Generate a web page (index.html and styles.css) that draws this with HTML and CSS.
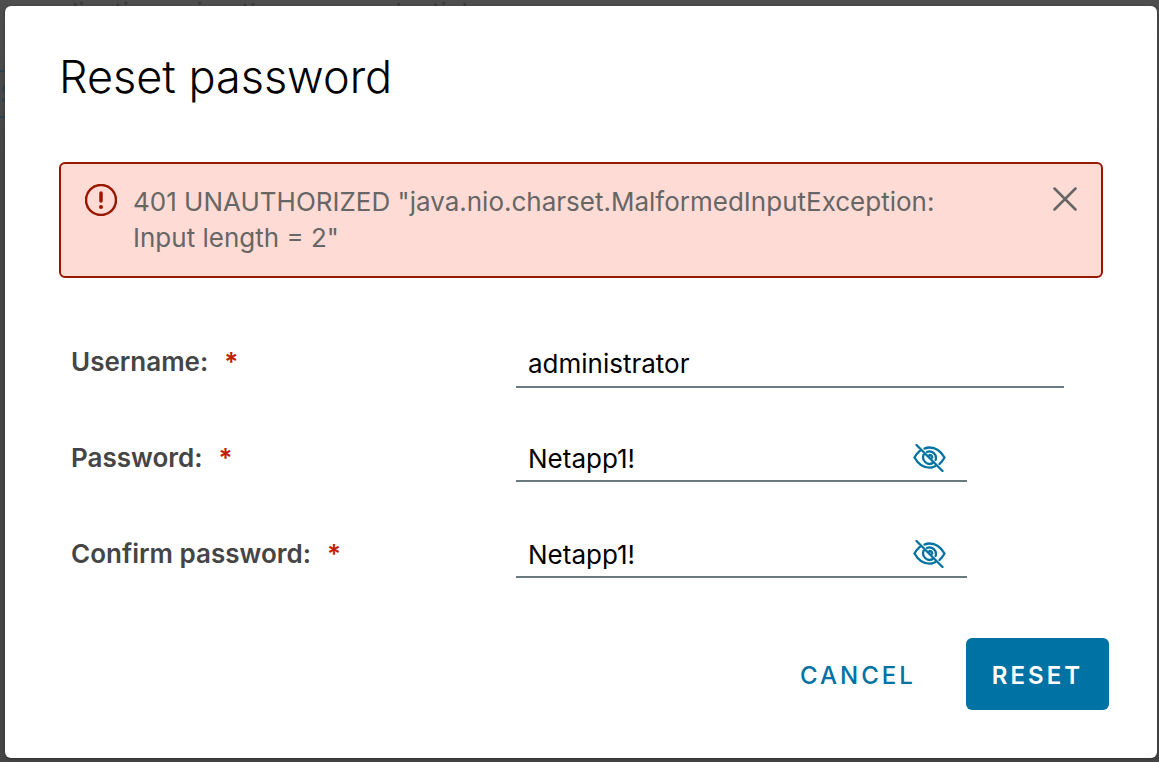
FILE: index.html
```html
<!DOCTYPE html>
<html lang="en">
<head>
<meta charset="utf-8">
<title>Reset password</title>
<link rel="stylesheet" href="styles.css">
</head>
<body>
<div class="page" aria-hidden="true">
  <p class="page-text">e application using the new credentials</p>
  <span class="page-action">S</span>
</div>
<div class="overlay">
<form class="modal" role="dialog" aria-modal="true" aria-labelledby="title">
  <h1 class="title" id="title">Reset password</h1>
  <div class="alert" role="alert">
    <svg class="alert-icon" viewBox="0 0 32 32" aria-hidden="true">
      <circle cx="16" cy="16" r="15"/>
      <path d="M16 9v8"/>
      <circle class="dot" cx="16" cy="23" r="2"/>
    </svg>
    <p class="alert-text">401 UNAUTHORIZED "java.nio.charset.MalformedInputException: Input length = 2"</p>
    <button class="close" type="button" aria-label="Close alert">
      <svg viewBox="0 0 24 24" aria-hidden="true"><path d="M1.500 1.500l21 21M22.500 1.500l-21 21"/></svg>
    </button>
  </div>
  <div class="fields">
    <div class="field">
      <label class="label" for="username">Username:<span class="required">*</span></label>
      <div class="control"><input class="input" id="username" type="text" value="administrator" required></div>
    </div>
    <div class="field">
      <label class="label" for="password">Password:<span class="required">*</span></label>
      <div class="control control-short">
        <input class="input" id="password" type="text" value="Netapp1!" required>
        <button class="eye" type="button" aria-label="Hide password">
          <svg viewBox="0 0 34 28" aria-hidden="true"><path d="M11.500 4.600C13 3.900 14.800 3.500 16.500 3.500c6.500 0 11.500 4 15 10-1.400 2.600-3 4.700-5 6.500M22 22.300c-1.700.900-3.600 1.400-5.500 1.400-6.500 0-11.500-4-15-10.200C3 10.800 4.700 8.700 6.800 6.900M14 7.800A6.600 6.600 0 0 1 22.600 16M19.200 19.400A6.600 6.600 0 0 1 10.500 11M16.500 11a3 3 0 0 1 2.800 2.500M3.500 1l26 26"/></svg>
        </button>
      </div>
    </div>
    <div class="field">
      <label class="label" for="confirm">Confirm password:<span class="required">*</span></label>
      <div class="control control-short">
        <input class="input" id="confirm" type="text" value="Netapp1!" required>
        <button class="eye" type="button" aria-label="Hide confirmed password">
          <svg viewBox="0 0 34 28" aria-hidden="true"><path d="M11.500 4.600C13 3.900 14.800 3.500 16.500 3.500c6.500 0 11.500 4 15 10-1.400 2.600-3 4.700-5 6.500M22 22.300c-1.700.900-3.600 1.400-5.500 1.400-6.500 0-11.500-4-15-10.200C3 10.800 4.700 8.700 6.800 6.900M14 7.800A6.600 6.600 0 0 1 22.600 16M19.200 19.400A6.600 6.600 0 0 1 10.500 11M16.500 11a3 3 0 0 1 2.800 2.500M3.500 1l26 26"/></svg>
        </button>
      </div>
    </div>
  </div>
  <div class="actions">
    <button class="btn" type="button">CANCEL</button>
    <button class="btn btn-primary" type="submit">RESET</button>
  </div>
</form>
</div>
</body>
</html>
```
FILE: styles.css
```css
* { box-sizing: border-box; }
body {
  margin: 0;
  min-height: 100vh;
  background: linear-gradient(#4e4e4e, #454545 160px);
  font-family: Inter, "Open Sans", sans-serif;
  font-size: 26px;
  color: #000;
}
button, input { font: inherit; }
.page { color: #3a3a3a; }
.page-text {
  margin: 0;
  padding: 0 3px;
  line-height: 26px;
  white-space: nowrap;
}
.page-action {
  display: inline-block;
  margin-top: 44px;
  padding-right: 8px;
  border: 2px solid #2b4352;
  border-left: 0;
  line-height: 44px;
  color: #2b4352;
}
.overlay {
  position: absolute;
  inset: 0;
  padding: 6px 2px 4px 5px;
}
.modal {
  display: flex;
  flex-direction: column;
  min-height: 100%;
  padding: 46px 48px 48px 54px;
  border-radius: 6px;
  background: #fff;
  box-shadow: 0 1px 3px #303030;
}
.title {
  margin: 0 0 60px;
  font-size: 45px;
  line-height: 50px;
  font-weight: 300;
}
.alert {
  display: flex;
  align-items: flex-start;
  margin-right: 6px;
  padding: 20px 24px;
  border: 2px solid #991700;
  border-radius: 6px;
  background: #fedcd5;
}
.alert-icon {
  flex: none;
  width: 32px;
  height: 32px;
  margin-right: 16px;
  fill: none;
  stroke: #991700;
  stroke-width: 2.500;
  stroke-linecap: round;
}
.alert-icon path { stroke-width: 3.500; }
.alert-icon .dot { fill: #991700; stroke: none; }
.alert-text {
  flex: 1;
  margin: 0;
  padding-right: 88px;
  line-height: 36px;
  color: #666;
}
.close, .eye {
  display: flex;
  flex: none;
  padding: 0;
  border: 0;
  background: none;
}
.close { padding-top: 3px; }
.close svg {
  width: 24px;
  height: 24px;
  fill: none;
  stroke: #666;
  stroke-width: 2.500;
  stroke-linecap: round;
}
.fields {
  display: grid;
  gap: 48px;
  margin-top: 62px;
  padding: 0 45px 0 12px;
}
.field {
  display: grid;
  grid-template-columns: 445fr 548fr;
  height: 48px;
}
.label {
  display: flex;
  gap: 16px;
  line-height: 43px;
  font-weight: 600;
  color: #454545;
}
.required { color: #c21d00; }
.control {
  display: flex;
  align-items: center;
  height: 48px;
  padding: 0 12px;
  border-bottom: 2px solid #6a7a81;
}
.control-short {
  width: 82.300%;
  height: 46px;
  padding-right: 20px;
}
.input {
  flex: 1;
  min-width: 0;
  padding: 0;
  border: 0;
  outline: 0;
  background: none;
  color: #000;
}
.eye svg {
  width: 34px;
  height: 28px;
  fill: none;
  stroke: #0072a3;
  stroke-width: 2.300;
  stroke-linecap: round;
}
.actions {
  display: flex;
  justify-content: flex-end;
  gap: 24px;
  margin-top: 58px;
}
.btn {
  height: 72px;
  padding: 2px 26px 0;
  border: 0;
  border-radius: 6px;
  background: none;
  font-size: 24px;
  font-weight: 500;
  letter-spacing: 3px;
  color: #0072a3;
}
.btn-primary {
  background: #0072a3;
  font-weight: 600;
  color: #fff;
}
```
